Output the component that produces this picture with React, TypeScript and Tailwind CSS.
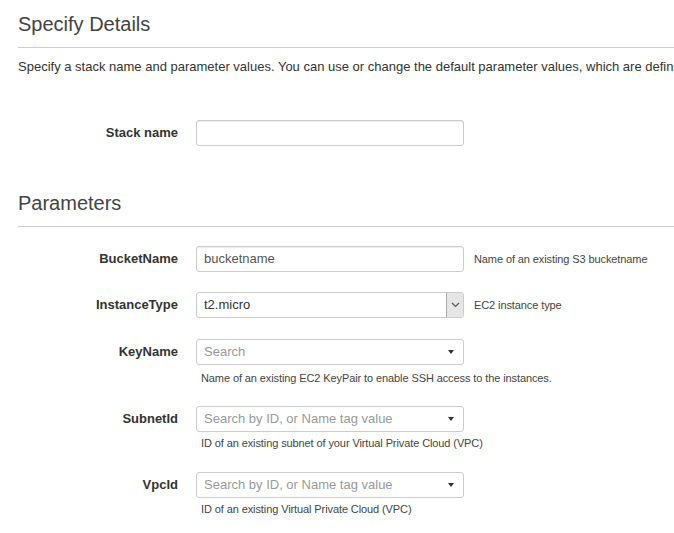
import React from 'react';

const Caret = () => (
  <svg width="8" height="4" viewBox="0 0 8 4" className="shrink-0">
    <path d="M1 0h6L4 4z" fill="#333" />
  </svg>
);

const Chevron = () => (
  <svg width="9" height="6" viewBox="0 0 9 6">
    <path d="M1 1l3.5 3.5L8 1" fill="none" stroke="#555" strokeWidth="1.2" />
  </svg>
);

const Label: React.FC<{ text: string }> = ({ text }) => (
  <div className="w-[160px] shrink-0 text-right text-[13px] font-bold text-[#333] h-[26px] leading-[26px]">{text}</div>
);

const Help: React.FC<{ text: string }> = ({ text }) => (
  <p className="text-[11px] text-[#444] leading-[14px] tracking-[-0.1px]">{text}</p>
);

export default function App() {
  return (
    <div className="bg-white w-[674px] h-[533px] overflow-hidden pl-[18px] font-['Liberation_Sans',Arial,sans-serif] text-[#333]">
      {/* Specify Details */}
      <h2 className="pt-[12px] text-[20px] leading-[24px] text-[#444]">Specify Details</h2>
      <div className="mt-[11px] border-t border-[#ccc]" />
      <p className="mt-[11px] text-[13px] leading-[16px] whitespace-nowrap">
        Specify a stack name and parameter values. You can use or change the default parameter values, which are defined in the AWS CloudFormation template.
      </p>

      <div className="mt-[45px] flex items-start gap-[18px]">
        <Label text="Stack name" />
        <div className="w-[268px] h-[26px] border border-[#ccc] rounded-[3px] bg-white shadow-[inset_0_1px_1px_rgba(0,0,0,0.075)]" />
      </div>

      {/* Parameters */}
      <h2 className="mt-[45px] text-[20px] leading-[24px] text-[#444]">Parameters</h2>
      <div className="mt-[11px] border-t border-[#ccc]" />

      <div className="mt-[19px] flex flex-col">
        <div className="flex items-center gap-[18px]">
          <Label text="BucketName" />
          <div className="w-[268px] h-[26px] border border-[#ccc] rounded-[3px] px-[7px] text-[13px] leading-[24px] text-[#555] shadow-[inset_0_1px_1px_rgba(0,0,0,0.075)]">bucketname</div>
          <div className="-ml-[8px]"><Help text="Name of an existing S3 bucketname" /></div>
        </div>

        <div className="mt-[20px] flex items-center gap-[18px]">
          <Label text="InstanceType" />
          <div className="w-[268px] h-[26px] border border-[#ccc] rounded-[3px] flex text-[13px] text-[#333]">
            <div className="flex-1 px-[7px] leading-[24px]">t2.micro</div>
            <div className="w-[17px] border-l border-[#aaa] bg-[#e6e6e6] flex items-center justify-center">
              <Chevron />
            </div>
          </div>
          <div className="-ml-[8px]"><Help text="EC2 instance type" /></div>
        </div>

        <div className="mt-[21px] flex items-start gap-[18px]">
          <Label text="KeyName" />
          <div className="flex flex-col gap-[6px]">
            <div className="w-[268px] h-[26px] border border-[#ccc] rounded-[3px] flex items-center justify-between pl-[7px] pr-[8px] text-[13px] text-[#999]">
              <span>Search</span>
              <Caret />
            </div>
            <div className="pl-[5px]"><Help text="Name of an existing EC2 KeyPair to enable SSH access to the instances." /></div>
          </div>
        </div>

        <div className="mt-[21px] flex items-start gap-[18px]">
          <Label text="SubnetId" />
          <div className="flex flex-col gap-[4px]">
            <div className="w-[268px] h-[26px] border border-[#ccc] rounded-[3px] flex items-center justify-between pl-[7px] pr-[8px] text-[13px] text-[#999]">
              <span>Search by ID, or Name tag value</span>
              <Caret />
            </div>
            <div className="pl-[5px]"><Help text="ID of an existing subnet of your Virtual Private Cloud (VPC)" /></div>
          </div>
        </div>

        <div className="mt-[22px] flex items-start gap-[18px]">
          <Label text="VpcId" />
          <div className="flex flex-col gap-[4px]">
            <div className="w-[268px] h-[26px] border border-[#ccc] rounded-[3px] flex items-center justify-between pl-[7px] pr-[8px] text-[13px] text-[#999]">
              <span>Search by ID, or Name tag value</span>
              <Caret />
            </div>
            <div className="pl-[5px]"><Help text="ID of an existing Virtual Private Cloud (VPC)" /></div>
          </div>
        </div>
      </div>
    </div>
  );
}
